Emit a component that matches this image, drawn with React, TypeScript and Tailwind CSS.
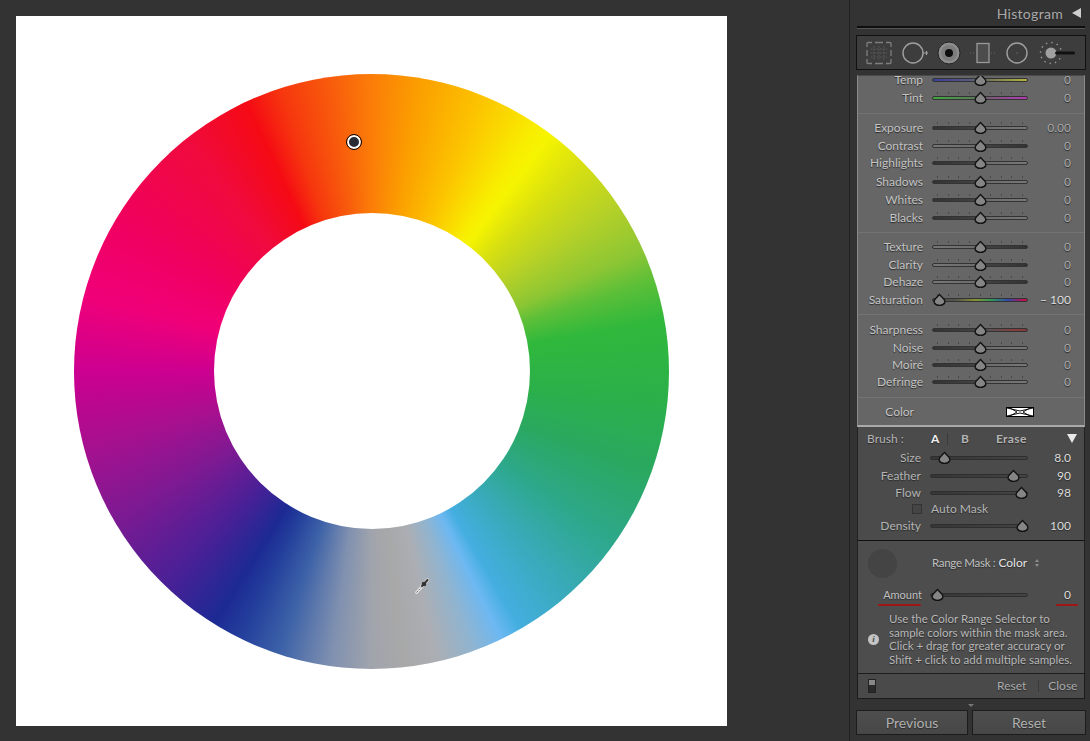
import React from 'react';

const txt = "[text-shadow:0_1px_1px_#2a2a2a]";
const TICKS = [0, 1, 2, 3, 4, 5, 6, 7, 8];

// tracks, written out so the classes get built
const LIGHT_R = "bg-[linear-gradient(90deg,#333_0%,#444_50%,#6b6b6b_52%,#777_100%)] border border-[#333]";
const DARK_R = "bg-[linear-gradient(90deg,#777_0%,#6b6b6b_48%,#444_50%,#333_100%)] border border-[#333]";
const TEMP = "bg-[linear-gradient(90deg,#3a3f9a,#5d5f7a_45%,#77775a_60%,#b5b53a)] border border-[#333]";
const TINT = "bg-[linear-gradient(90deg,#3fa83f,#5a7a5a_45%,#7a5a7a_60%,#b53ab5)] border border-[#333]";
const SAT = "bg-[linear-gradient(90deg,#444,#55574a_25%,#8a9030_45%,#2f9a5a_62%,#3048b0_80%,#c01050_96%)] border border-[#333]";
const SHARP = "bg-[linear-gradient(90deg,#333_0%,#444_50%,#5a5050_60%,#8a3c3c_90%,#7a3a3a_100%)] border border-[#333]";
const BRUSH = "bg-[linear-gradient(90deg,#363636,#444)] border border-[#2e2e2e]";

function Thumb({ at }: { at: number }) {
  return (
    <svg width="13" height="14" viewBox="0 0 13 14" className="absolute top-[-6px]" style={{ left: at - 6.5 }}>
      <path d="M6.5 1.5 L10.8 6 Q12.2 7.6 11.8 9.6 Q10.4 12.4 6.5 12.4 Q2.6 12.4 1.2 9.6 Q0.8 7.6 2.2 6 Z" fill="#858585" stroke="#111" strokeWidth="1.3" />
    </svg>
  );
}

function Slider({ track, at, width = "w-[96px]" }: { track: string; at: number; width?: string }) {
  return (
    <div className={`relative h-[4px] rounded-full shrink-0 ${width} ${track}`}>
      <div className="absolute left-[4px] right-[4px] top-[-5px] flex justify-between">
        {TICKS.map((t) => (
          <span key={t} className="w-px h-[2px] bg-[#484848]" />
        ))}
      </div>
      <Thumb at={at} />
    </div>
  );
}

type RowProps = { label: string; value: string; track: string; at?: number; h: string; bright?: boolean };

function Row({ label, value, track, at = 47, h, bright }: RowProps) {
  return (
    <div className={`flex items-center ${h}`}>
      <span className={`w-[65px] text-right text-[12px] leading-none text-[#c4c4c4] whitespace-nowrap ${txt}`}>{label}</span>
      <div className="ml-[9px]">
        <Slider track={track} at={at} />
      </div>
      <span className={`w-[43px] text-right text-[12px] leading-none ${bright ? "text-[#e0e0e0]" : "text-[#a8a8a8]"} ${txt}`}>{value}</span>
    </div>
  );
}

function BrushRow({ label, value, at, h }: { label: string; value: string; at: number; h: string }) {
  return (
    <div className={`flex items-center ${h}`}>
      <span className={`w-[63px] text-right text-[12px] leading-none text-[#b4b4b4] ${txt}`}>{label}</span>
      <div className="ml-[9px]">
        <Slider track={BRUSH} at={at} width="w-[98px]" />
      </div>
      <span className={`w-[43px] text-right text-[12px] leading-none text-[#dcdcdc] ${txt}`}>{value}</span>
    </div>
  );
}

function ToolIcons() {
  return (
    <div className="h-full flex items-center">
      <svg width="26" height="24" viewBox="0 0 26 24" className="ml-[9px]" fill="none" stroke="#7e7e7e">
        <path d="M1 6V2.5Q1 1.5 2 1.5H6M20 1.5H24Q25 1.5 25 2.5V6M25 18V21.5Q25 22.5 24 22.5H20M6 22.5H2Q1 22.5 1 21.5V18" strokeWidth="1.3" />
        <path d="M9 1.5H17M9 22.5H17M1 9V15M25 9V15" strokeWidth="1.3" />
        <path d="M5 8H21M5 12H21M5 16H21M8 5V19M13 5V19M18 5V19" stroke="#5c5c5c" strokeDasharray="1.5 1.5" />
      </svg>
      <svg width="28" height="24" viewBox="0 0 28 24" className="ml-[10px]" fill="none" stroke="#a0a0a0">
        <circle cx="11" cy="12" r="10" strokeWidth="1.4" />
        <path d="M21 12H26M24.5 10V14" strokeWidth="1.2" />
      </svg>
      <svg width="24" height="24" viewBox="0 0 24 24" className="ml-[7px]">
        <circle cx="12" cy="12" r="11" fill="#8d8d8d" stroke="#222" />
        <circle cx="12" cy="12" r="8" fill="#7c7c7c" />
        <circle cx="12" cy="12" r="4" fill="#0d0d0d" />
      </svg>
      <svg width="28" height="24" viewBox="0 0 28 24" className="ml-[8px]" fill="none">
        <rect x="8" y="2.5" width="12" height="19" stroke="#9a9a9a" strokeWidth="1.3" fill="#4c4c4c" />
        <path d="M1 12H6M22 12H27" stroke="#666" strokeDasharray="1 2" />
      </svg>
      <svg width="24" height="24" viewBox="0 0 24 24" className="ml-[8px]" fill="none">
        <circle cx="12" cy="12" r="10" stroke="#a0a0a0" strokeWidth="1.4" />
        <circle cx="12" cy="12" r="0.6" fill="#999" />
      </svg>
      <svg width="40" height="24" viewBox="0 0 40 24" className="ml-[10px]">
        <circle cx="12" cy="12" r="10.5" fill="none" stroke="#9a9a9a" strokeWidth="1.4" strokeDasharray="1.4 4.1" />
        <circle cx="12" cy="12" r="5.5" fill="#a0a0a0" />
        <rect x="16" y="10.5" width="20" height="3" rx="1.5" fill="#111" />
      </svg>
    </div>
  );
}

function Eyedropper() {
  return (
    <svg width="18" height="20" viewBox="0 0 18 20" className="absolute left-[398px] top-[559px]">
      <path d="M2.5 17.5 L8 11.5" stroke="#e8e8e8" strokeWidth="2.6" strokeLinecap="round" />
      <path d="M2.5 17.5 L8 11.5" stroke="#666" strokeWidth="1" strokeDasharray="2 1" />
      <path d="M8 11 L13.5 5" stroke="#dddddd" strokeWidth="3.6" strokeLinecap="round" />
      <path d="M8 11 L13.5 5" stroke="#3c3c3c" strokeWidth="2.2" strokeLinecap="round" />
      <circle cx="10" cy="9" r="2.3" fill="#333" />
    </svg>
  );
}

export default function App() {
  return (
    <div className="w-[1090px] h-[741px] overflow-hidden flex bg-[#333333] font-['Lato','Liberation_Sans',sans-serif]">
      {/* Image area */}
      <div className="w-[850px] shrink-0 pl-[16px] pt-[16px] border-r border-[#222]">
        <div className="relative w-[711px] h-[710px] bg-white flex items-center justify-center">
          <div className="w-[595px] h-[595px] rounded-full flex items-center justify-center bg-[conic-gradient(#fb7d08_0deg,#fba000_10deg,#fcc400_22deg,#f8ee00_34deg,#f6f400_37deg,#d8e010_45deg,#b4d028_56deg,#8cc634_66deg,#5cbf38_72deg,#30b83c_80deg,#2bb04a_96deg,#2aa860_110deg,#2da88a_125deg,#38aab8_138deg,#44aee0_150deg,#6cb8f2_154deg,#90b4d0_160deg,#abaeb4_167deg,#a8a8a8_174deg,#a0a4ac_180deg,#7f90b0_188deg,#3d62a8_198deg,#24409c_206deg,#1c2a94_212deg,#4a2096_224deg,#7c1a92_240deg,#a6108f_255deg,#cc0090_270deg,#f00078_285deg,#f00060_300deg,#f00a3c_322deg,#f50a14_335deg,#f6360e_342deg,#f85c0c_352deg,#fb7d08_360deg)]">
            <div className="w-[316px] h-[316px] rounded-full bg-white" />
          </div>
          {/* sampling marker */}
          <div className="absolute left-[331px] top-[119px] w-[14px] h-[14px] rounded-full bg-[#2b2b35] border-[2px] border-white outline outline-1 outline-black" />
          <Eyedropper />
        </div>
      </div>

      {/* Right panel */}
      <div className="w-[240px] shrink-0 bg-[#333333] pl-[6px] pr-[4px]">
        <div className="h-[26px] flex items-center justify-end pr-[5px]">
          <span className={`text-[14px] text-[#a9a9a9] tracking-[0.3px] ${txt}`}>Histogram</span>
          <span className="ml-[9px] w-0 h-0 border-y-[5px] border-y-transparent border-r-[9px] border-r-[#cfcfcf]" />
        </div>
        <div className="h-[3px] mx-px bg-[#0e0e0e] border-b border-[#555]" />
        <div className="h-[35px] mt-[6px] bg-[#3d3d3d] border border-[#111]">
          <ToolIcons />
        </div>

        {/* Basic panel */}
        <div className="mt-[5px] mx-px h-[352px] bg-[#666666] border-x border-b-2 border-x-[#8a8a8a] border-b-[#aaaaaa] border-t border-t-[#4a4a4a] overflow-hidden">
          <div className="border-b border-[#737373] pb-[6px] mt-[-5px]">
            <Row label="Temp" value="0" track={TEMP} h="h-[18px]" />
            <Row label="Tint" value="0" track={TINT} h="h-[18px]" />
          </div>
          <div className="border-b border-[#737373] pt-[5px] pb-[6px]">
            <Row label="Exposure" value="0.00" track={LIGHT_R} h="h-[18px]" />
            <Row label="Contrast" value="0" track={DARK_R} h="h-[17px]" />
            <Row label="Highlights" value="0" track={LIGHT_R} h="h-[18px]" />
            <Row label="Shadows" value="0" track={LIGHT_R} h="h-[19px]" />
            <Row label="Whites" value="0" track={LIGHT_R} h="h-[18px]" />
            <Row label="Blacks" value="0" track={LIGHT_R} h="h-[17px]" />
          </div>
          <div className="border-b border-[#737373] pt-[5px] pb-[6px]">
            <Row label="Texture" value="0" track={DARK_R} h="h-[18px]" />
            <Row label="Clarity" value="0" track={DARK_R} h="h-[17px]" />
            <Row label="Dehaze" value="0" track={DARK_R} h="h-[18px]" />
            <Row label="Saturation" value="– 100" track={SAT} at={6} h="h-[17px]" bright />
          </div>
          <div className="border-b border-[#737373] pt-[6px] pb-[7px]">
            <Row label="Sharpness" value="0" track={SHARP} h="h-[18px]" />
            <Row label="Noise" value="0" track={LIGHT_R} h="h-[17px]" />
            <Row label="Moiré" value="0" track={LIGHT_R} h="h-[17px]" />
            <Row label="Defringe" value="0" track={LIGHT_R} h="h-[17px]" />
          </div>
          <div className="flex items-center h-[28px]">
            <span className={`w-[56px] text-right text-[12px] leading-none text-[#c4c4c4] ${txt}`}>Color</span>
            <div className="ml-[92px] w-[28px] h-[10px] bg-black p-px">
              <svg width="26" height="8" viewBox="0 0 26 8" className="block bg-white">
                <path d="M0 0 L13 3 L26 0 M0 8 L13 5 L26 8 M3 0 L10 4 L3 8 M23 0 L16 4 L23 8" fill="none" stroke="#111" strokeWidth="1" />
              </svg>
            </div>
          </div>
        </div>

        {/* Brush */}
        <div className="mx-px h-[113px] bg-[#4b4b4b] border-x border-[#222]">
          <div className="h-[22px] pt-px flex items-center text-[12px] leading-none">
            <span className={`ml-[9px] w-[64px] text-[#b4b4b4] ${txt}`}>Brush :</span>
            <span className={`w-[8px] font-bold text-[#f0f0f0] ${txt}`}>A</span>
            <span className="ml-[8px] w-px h-[12px] bg-[#3a3a3a]" />
            <span className={`ml-[13px] font-bold text-[#b4b4b4] ${txt}`}>B</span>
            <span className={`ml-[27px] font-bold text-[#b4b4b4] tracking-[0.4px] ${txt}`}>Erase</span>
            <span className="ml-[40px] w-0 h-0 border-x-[5px] border-x-transparent border-t-[9px] border-t-[#e8e8e8]" />
          </div>
          <BrushRow label="Size" value="8.0" at={13} h="h-[18px]" />
          <BrushRow label="Feather" value="90" at={82} h="h-[17px]" />
          <BrushRow label="Flow" value="98" at={90} h="h-[18px]" />
          <div className="h-[13px] flex items-center">
            <span className="ml-[54px] w-[10px] h-[10px] bg-[#454545] border border-[#333]" />
            <span className={`ml-[9px] text-[12px] leading-none text-[#b4b4b4] ${txt}`}>Auto Mask</span>
          </div>
          <BrushRow label="Density" value="100" at={91} h="h-[22px]" />
        </div>

        {/* Range mask */}
        <div className="mx-px h-[133px] bg-[#4d4d4d] border-x border-[#222] border-t border-t-[#111]">
          <div className="h-[38px] flex items-center pt-[6px]">
            <span className="ml-[10px] w-[29px] h-[29px] rounded-full bg-[#444444]" />
            <span className={`ml-[35px] text-[11.5px] tracking-[-0.3px] leading-none text-[#c0c0c0] ${txt}`}>Range Mask :</span>
            <span className={`ml-[3px] text-[12px] leading-none text-[#e4e4e4] ${txt}`}>Color</span>
            <span className="ml-[8px] flex flex-col gap-[2px]">
              <span className="w-0 h-0 border-x-[2.5px] border-x-transparent border-b-[3px] border-b-[#8c8c8c]" />
              <span className="w-0 h-0 border-x-[2.5px] border-x-transparent border-t-[3px] border-t-[#8c8c8c]" />
            </span>
          </div>
          <div className="flex items-center h-[28px] pt-[3px]">
            <span className={`relative w-[64px] text-right text-[11px] leading-none text-[#c0c0c0] ${txt}`}>
              Amount
              <span className="absolute left-[20px] top-[15px] w-[43px] h-[2px] rounded-full bg-[#a01616]" />
            </span>
            <div className="ml-[8px]">
              <Slider track={BRUSH} at={6} width="w-[98px]" />
            </div>
            <span className={`relative w-[43px] text-right text-[12px] leading-none text-[#dcdcdc] ${txt}`}>
              0
              <span className="absolute right-[-7px] top-[15px] w-[22px] h-[2px] rounded-full bg-[#a01616]" />
            </span>
          </div>
          <div className="flex items-center mt-[5px]">
            <span className="ml-[10px] w-[11px] h-[11px] rounded-full bg-[#c4c4c4] text-[#444] text-[9px] leading-[11px] font-bold italic text-center font-['Liberation_Serif',serif]">i</span>
            <p className={`ml-[10px] text-[11.5px] leading-[13.7px] text-[#b8b8b8] whitespace-nowrap ${txt}`}>
              Use the Color Range Selector to<br />
              sample colors within the mask area.<br />
              Click + drag for greater accuracy or<br />
              Shift + click to add multiple samples.
            </p>
          </div>
        </div>

        {/* Footer */}
        <div className="mx-px h-[26px] bg-[#4a4a4a] border border-[#1c1c1c] flex items-center text-[12px] leading-none">
          <span className="ml-[10px] w-[8px] h-[14px] bg-[#2a2a2a] border border-[#222] flex flex-col">
            <span className="h-[5px] bg-[#888]" />
          </span>
          <span className={`ml-[121px] text-[#aaaaaa] ${txt}`}>Reset</span>
          <span className="ml-[12px] w-px h-[12px] bg-[#3a3a3a]" />
          <span className={`ml-[9px] text-[#aaaaaa] ${txt}`}>Close</span>
        </div>

        <div className="h-[11px] flex justify-center items-start pt-[5px]">
          <span className="w-0 h-0 border-x-[3px] border-x-transparent border-t-[3px] border-t-[#777]" />
        </div>

        <div className="flex justify-between">
          <button className={`w-[112px] h-[25px] bg-[linear-gradient(#4e4e4e,#474747)] border border-[#1c1c1c] text-[14px] leading-none text-[#b0b0b0] ${txt}`}>Previous</button>
          <button className={`w-[114px] h-[25px] bg-[linear-gradient(#4e4e4e,#474747)] border border-[#1c1c1c] text-[14px] leading-none text-[#b0b0b0] ${txt}`}>Reset</button>
        </div>
      </div>
    </div>
  );
}
